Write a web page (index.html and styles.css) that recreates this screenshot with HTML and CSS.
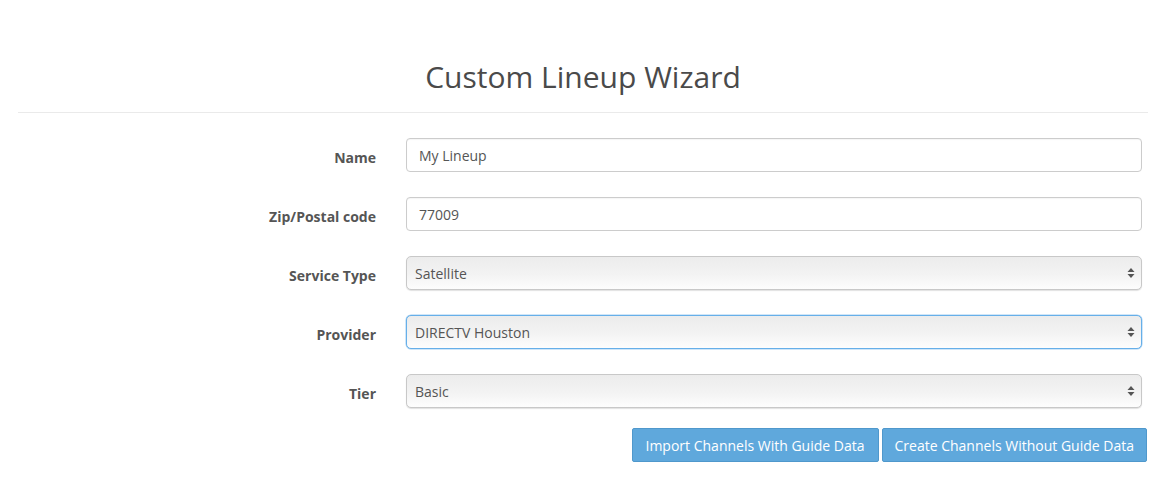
FILE: index.html
```html
<!DOCTYPE html>
<html>
<head>
<meta charset="utf-8">
<link rel="stylesheet" href="styles.css">
</head>
<body>
<div class="page">
  <h2 class="title">Custom Lineup Wizard</h2>
  <form class="form">
    <div class="row">
      <label class="label">Name</label>
      <input class="control" type="text" value="My Lineup">
    </div>
    <div class="row">
      <label class="label">Zip/Postal code</label>
      <input class="control" type="text" value="77009">
    </div>
    <div class="row">
      <label class="label">Service Type</label>
      <select class="control select"><option>Satellite</option></select>
    </div>
    <div class="row">
      <label class="label">Provider</label>
      <select class="control select focus"><option>DIRECTV Houston</option></select>
    </div>
    <div class="row">
      <label class="label">Tier</label>
      <select class="control select"><option>Basic</option></select>
    </div>
    <div class="actions">
      <button type="button" class="btn wide">Import Channels With Guide Data</button>
      <button type="button" class="btn">Create Channels Without Guide Data</button>
    </div>
  </form>
</div>
</body>
</html>
```

FILE: styles.css
```css
* { box-sizing: border-box; }
html, body { margin: 0; padding: 0; background: #fff; }
body {
  font-family: "Open Sans", "Liberation Sans", sans-serif;
  font-size: 14px;
  color: #555;
}
.page {
  margin: 0 19px 0 18px;
}
.title {
  margin: 0;
  padding-top: 56px;
  padding-bottom: 14px;
  font-size: 30px;
  font-weight: 400;
  line-height: 42px;
  text-align: center;
  color: #4a4a4a;
  border-bottom: 1px solid #eaeaea;
}
.form {
  padding-top: 25px;
}
.row {
  display: flex;
  align-items: center;
  margin-bottom: 25px;
  padding-right: 6px;
}
.label {
  width: 358px;
  flex: none;
  text-align: right;
  font-weight: 700;
  font-size: 14px;
  color: #555;
  margin-right: 30px;
  padding-top: 4px;
}
.control {
  flex: 1;
  height: 34px;
  border: 1px solid #ccc;
  border-radius: 4px;
  padding: 0 12px;
  font-family: inherit;
  font-size: 14px;
  color: #555;
  background: #fff;
  outline: none;
  box-shadow: inset 0 1px 1px rgba(0,0,0,0.04);
}
.select {
  -webkit-appearance: none;
  appearance: none;
  padding: 0 8px;
  border: 1px solid #c8c8c8;
  border-radius: 5px;
  background-image:
    url("data:image/svg+xml;utf8,<svg xmlns='http://www.w3.org/2000/svg' width='8' height='12' viewBox='0 0 8 12'><path d='M4 1 L7.5 5 L0.5 5 Z' fill='%23555'/><path d='M4 11 L7.5 7 L0.5 7 Z' fill='%23555'/></svg>"),
    linear-gradient(#ececec, #f3f3f3 55%, #fdfdfd);
  background-repeat: no-repeat, no-repeat;
  background-position: right 6px center, 0 0;
  background-size: 8px 12px, 100% 100%;
  box-shadow: 0 1px 1px rgba(0,0,0,0.12);
}
.select.focus {
  border-color: #66afe9;
  box-shadow: 0 0 0 0.5px rgba(102,175,233,0.6);
}
.actions {
  display: flex;
  justify-content: flex-end;
  gap: 3px;
  margin-top: -5px;
  padding-right: 1px;
}
.btn {
  height: 34px;
  padding: 0 12px;
  font-family: inherit;
  font-size: 14px;
  color: #fff;
  background: #5fa8dc;
  border: 1px solid #4f98cc;
  border-radius: 2px;
  cursor: pointer;
}
.btn.wide {
  padding: 0 13px;
}
```
